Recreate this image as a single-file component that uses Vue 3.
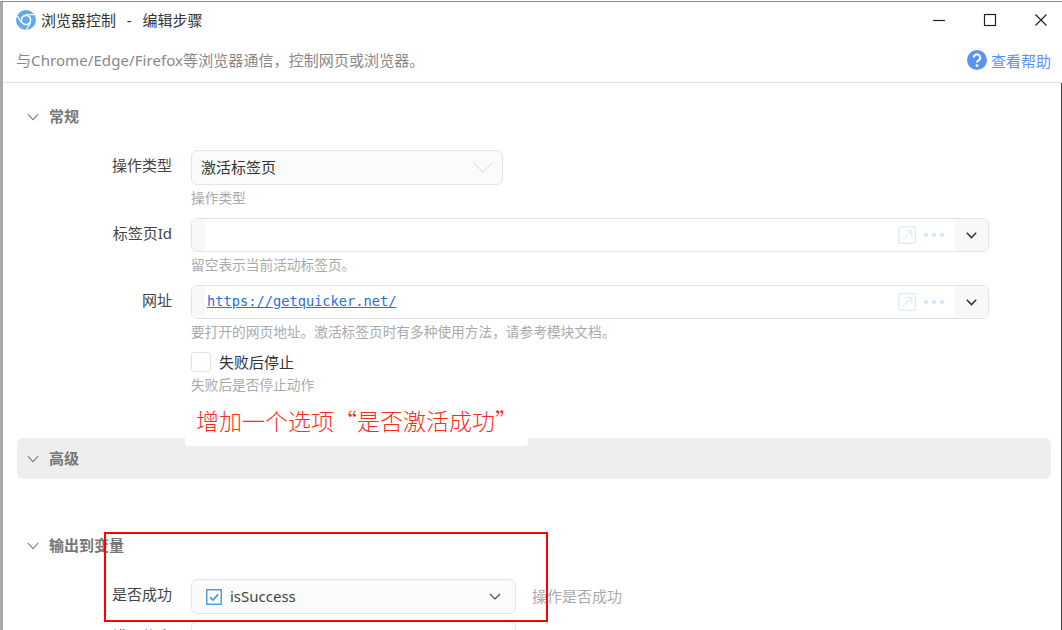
<script setup>
const rows = [
  { label: '标签页Id', value: '', hint: '留空表示当前活动标签页。' },
  { label: '网址', value: 'https://getquicker.net/', hint: '要打开的网页地址。激活标签页时有多种使用方法，请参考模块文档。' },
]
</script>

<template>
  <div class="screen">
    <div class="window">
      <header class="titlebar">
        <svg class="logo" width="20" height="20" viewBox="0 0 20 20">
          <circle cx="10" cy="10" r="10" fill="#62a9ec" />
          <circle cx="10" cy="10" r="5.4" fill="#fff" />
          <circle cx="10" cy="10" r="3.8" fill="#62a9ec" />
          <path d="M10 4.6h8.4M5.3 12.7 1.4 6M14.7 12.7 10 20" stroke="#fff" stroke-width="1.2" fill="none" />
        </svg>
        <span class="title">浏览器控制 &nbsp;-&nbsp; 编辑步骤</span>
        <div class="controls">
          <svg width="14" height="14" viewBox="0 0 14 14"><path d="M1 7.5h12" stroke="#222" stroke-width="1.2" /></svg>
          <svg width="14" height="14" viewBox="0 0 14 14"><rect x="1.5" y="1.5" width="11" height="11" fill="none" stroke="#222" stroke-width="1.2" /></svg>
          <svg width="14" height="14" viewBox="0 0 14 14"><path d="M1.5 1.5 12.5 12.5M12.5 1.5 1.5 12.5" stroke="#222" stroke-width="1.2" /></svg>
        </div>
      </header>
      <div class="descbar">
        <span class="desc">与Chrome/Edge/Firefox等浏览器通信，控制网页或浏览器。</span>
        <a class="help">
          <svg width="20" height="20" viewBox="0 0 20 20">
            <circle cx="10" cy="10" r="10" fill="#5b93f5" />
            <path d="M6.8 7.6a3.2 3.2 0 1 1 4.8 2.8c-1 .6-1.6 1-1.6 2.2" fill="none" stroke="#fff" stroke-width="2.2" />
            <circle cx="10" cy="15.6" r="1.4" fill="#fff" />
          </svg>
          查看帮助
        </a>
      </div>

      <main class="body">
        <div class="section-head first">
          <svg class="chev" width="12" height="8" viewBox="0 0 12 8"><path d="M.8 1 6 6.6 11.2 1" fill="none" stroke="#777" stroke-width="1.1" /></svg>
          <span>常规</span>
        </div>

        <div class="row type-row">
          <label class="label">操作类型</label>
          <div class="field">
            <div class="select wide">
              <span>激活标签页</span>
              <svg width="20" height="11" viewBox="0 0 20 11"><path d="M1 1 10 10 19 1" fill="none" stroke="#d8d8d8" stroke-width="1" /></svg>
            </div>
            <p class="hint">操作类型</p>
          </div>
        </div>

        <div v-for="row in rows" :key="row.label" class="row input-row">
          <label class="label">{{ row.label }}</label>
          <div class="field">
            <div class="input">
              <span class="stub"></span>
              <span class="url">{{ row.value }}</span>
              <svg class="open" width="18" height="18" viewBox="0 0 18 18">
                <rect x=".75" y=".75" width="16.5" height="16.5" rx="1" fill="none" stroke="#dfeefd" stroke-width="1.4" />
                <path d="M4.5 13.5 13.5 4.5M7.5 4.5h6v6" fill="none" stroke="#dfeefd" stroke-width="1.2" />
              </svg>
              <span class="dots"><i></i><i></i><i></i></span>
              <span class="drop">
                <svg width="11" height="7" viewBox="0 0 11 7"><path d="M.8.8 5.5 5.6 10.2.8" fill="none" stroke="#333" stroke-width="1.5" /></svg>
              </span>
            </div>
            <p class="hint">{{ row.hint }}</p>
          </div>
        </div>

        <div class="row check-row">
          <span class="label"></span>
          <div class="field">
            <label class="check"><span class="box"></span><span class="check-text">失败后停止</span></label>
            <p class="hint">失败后是否停止动作</p>
          </div>
        </div>

        <div class="advanced">
          <svg class="chev" width="12" height="8" viewBox="0 0 12 8"><path d="M.8 1 6 6.6 11.2 1" fill="none" stroke="#777" stroke-width="1.1" /></svg>
          <span>高级</span>
        </div>

        <div class="section-head output">
          <svg class="chev" width="12" height="8" viewBox="0 0 12 8"><path d="M.8 1 6 6.6 11.2 1" fill="none" stroke="#777" stroke-width="1.1" /></svg>
          <span>输出到变量</span>
        </div>

        <div class="row var-row">
          <label class="label">是否成功</label>
          <div class="select var">
            <svg width="16" height="16" viewBox="0 0 16 16">
              <rect x=".75" y=".75" width="14.5" height="14.5" fill="#fff" stroke="#4d9fe0" stroke-width="1.5" />
              <path d="M4 8.2 7 11 12 5.4" fill="none" stroke="#2b9be8" stroke-width="1.6" />
            </svg>
            <span class="var-name">isSuccess</span>
            <svg class="var-chev" width="12" height="7" viewBox="0 0 12 7"><path d="M1 1 6 6 11 1" fill="none" stroke="#444" stroke-width="1.1" /></svg>
          </div>
          <span class="var-hint">操作是否成功</span>
        </div>

        <div class="row cut-row">
          <label class="label">错误信息</label>
          <div class="cut-input"></div>
        </div>
      </main>
    </div>

    <div class="callout">增加一个选项“是否激活成功”</div>
    <div class="redbox"></div>
  </div>
</template>

<style scoped>
.screen {
  position: relative;
  width: 1062px;
  height: 630px;
  overflow: hidden;
  background: #fff;
  font-family: "Noto Sans", "Noto Sans CJK SC", sans-serif;
  color: #333;
  font-size: 15px;
}
.window {
  height: 629px;
  margin-top: 1px;
  border-top: 1px solid #8a8a8a;
  border-left: 3px solid #a8a8a8;
  box-sizing: border-box;
  background: #fff;
}
.titlebar {
  display: flex;
  align-items: center;
  height: 36px;
  padding-left: 13px;
}
.logo {
  margin-right: 5px;
}
.title {
  font-size: 15px;
  line-height: 20px;
  margin-top: -1px;
  word-spacing: 1.5px;
  color: #333;
}
.controls {
  margin-left: auto;
  display: flex;
  align-items: center;
  gap: 37px;
  padding-right: 14px;
}
.descbar {
  display: flex;
  align-items: center;
  justify-content: space-between;
  height: 44px;
  padding: 0 11px 0 13px;
  border-bottom: 1px solid #e0e0e0;
}
.desc {
  color: #888;
  font-size: 15px;
  line-height: 20px;
  margin-top: -1px;
  letter-spacing: .08px;
}
.help {
  display: flex;
  align-items: center;
  gap: 4px;
  color: #5b93f5;
  font-size: 15px;
}
.body {
  height: 547px;
  overflow: hidden;
  border-right: 1px solid #444;
}
.section-head {
  display: flex;
  align-items: center;
  gap: 10px;
  height: 24px;
  padding-left: 24px;
  font-size: 15px;
  font-weight: 700;
  color: #777;
}
.section-head span {
  line-height: 20px;
  margin-top: -2px;
}
.section-head.first {
  margin-top: 22px;
}
.section-head.output {
  margin-top: 55px;
}
.row {
  display: flex;
  align-items: flex-start;
}
.label {
  flex: 0 0 188px;
  padding-right: 19px;
  box-sizing: border-box;
  text-align: right;
  font-size: 15px;
  line-height: 30px;
  color: #444;
}
.type-row {
  margin-top: 21px;
}
.input-row {
  margin-top: 11px;
}
.check-row {
  margin-top: 11px;
}
.field {
  flex: 1;
}
.select {
  display: flex;
  align-items: center;
  box-sizing: border-box;
  height: 35px;
  border: 1px solid #e4e4e4;
  border-radius: 6px;
  background: #fbfbfb;
  font-size: 15px;
  color: #333;
}
.select.wide {
  width: 312px;
  justify-content: space-between;
  padding: 0 9px;
}
.select.wide span {
  line-height: 20px;
  margin-top: -2px;
}
.hint {
  margin: 0;
  font-size: 13.7px;
  line-height: 17px;
  padding: 4px 0 1px;
  color: #aaa;
}
.input {
  display: flex;
  align-items: center;
  box-sizing: border-box;
  width: 798px;
  height: 34px;
  border: 1px solid #e2e2e2;
  border-radius: 6px;
  overflow: hidden;
  background: #fff;
}
.stub {
  flex: 0 0 13px;
  align-self: stretch;
  background: #f8f8f8;
}
.url {
  flex: 1;
  padding-left: 2px;
  font-family: "DejaVu Sans Mono", "Liberation Mono", monospace;
  font-size: 13.7px;
  line-height: 18px;
  margin-top: -2px;
  color: #2a6fdb;
  text-decoration: underline;
}
.open {
  margin-right: 8px;
}
.dots {
  display: flex;
  gap: 4px;
  margin-right: 11px;
}
.dots i {
  width: 4px;
  height: 4px;
  border-radius: 50%;
  background: #cfe5fb;
}
.drop {
  display: flex;
  align-items: center;
  justify-content: center;
  flex: 0 0 33px;
  align-self: stretch;
  background: #f8f8f8;
}
.check {
  display: flex;
  align-items: center;
  gap: 8px;
  height: 20px;
  font-size: 15px;
  color: #333;
}
.check-text {
  line-height: 20px;
  margin-top: -1px;
}
.box {
  width: 20px;
  height: 20px;
  box-sizing: border-box;
  border: 1px solid #e2e2e2;
  border-radius: 3px;
}
.advanced {
  display: flex;
  align-items: center;
  gap: 10px;
  height: 41px;
  margin: 44px 10px 0 14px;
  padding-left: 10px;
  border-radius: 6px;
  background: #eee;
  font-size: 15px;
  font-weight: 700;
  color: #777;
}
.advanced span {
  line-height: 20px;
  margin-top: -2px;
}
.var-row {
  margin-top: 21px;
}
.select.var {
  flex: none;
  width: 325px;
  padding: 0 14px;
}
.var-name {
  margin-left: 8px;
  line-height: 20px;
  margin-top: -2px;
  color: #444;
}
.var-chev {
  margin-left: auto;
}
.var-hint {
  margin-left: 16px;
  line-height: 35px;
  color: #aaa;
}
.cut-row {
  margin-top: 7px;
}
.cut-input {
  box-sizing: border-box;
  width: 325px;
  height: 34px;
  border: 1px solid #e2e2e2;
  border-radius: 6px;
}
.callout {
  position: absolute;
  left: 185px;
  top: 405px;
  width: 343px;
  height: 41px;
  padding: 0 0 12px 11px;
  box-sizing: border-box;
  display: flex;
  align-items: center;
  border-radius: 0 0 4px 4px;
  background: #fff;
  color: #ff2a1a;
  font-family: "Noto Sans CJK SC", sans-serif;
  font-size: 23px;
  font-weight: 300;
  white-space: nowrap;
}
.redbox {
  position: absolute;
  left: 104px;
  top: 532px;
  width: 444px;
  height: 90px;
  box-sizing: border-box;
  border: 2px solid #f00;
}
</style>
